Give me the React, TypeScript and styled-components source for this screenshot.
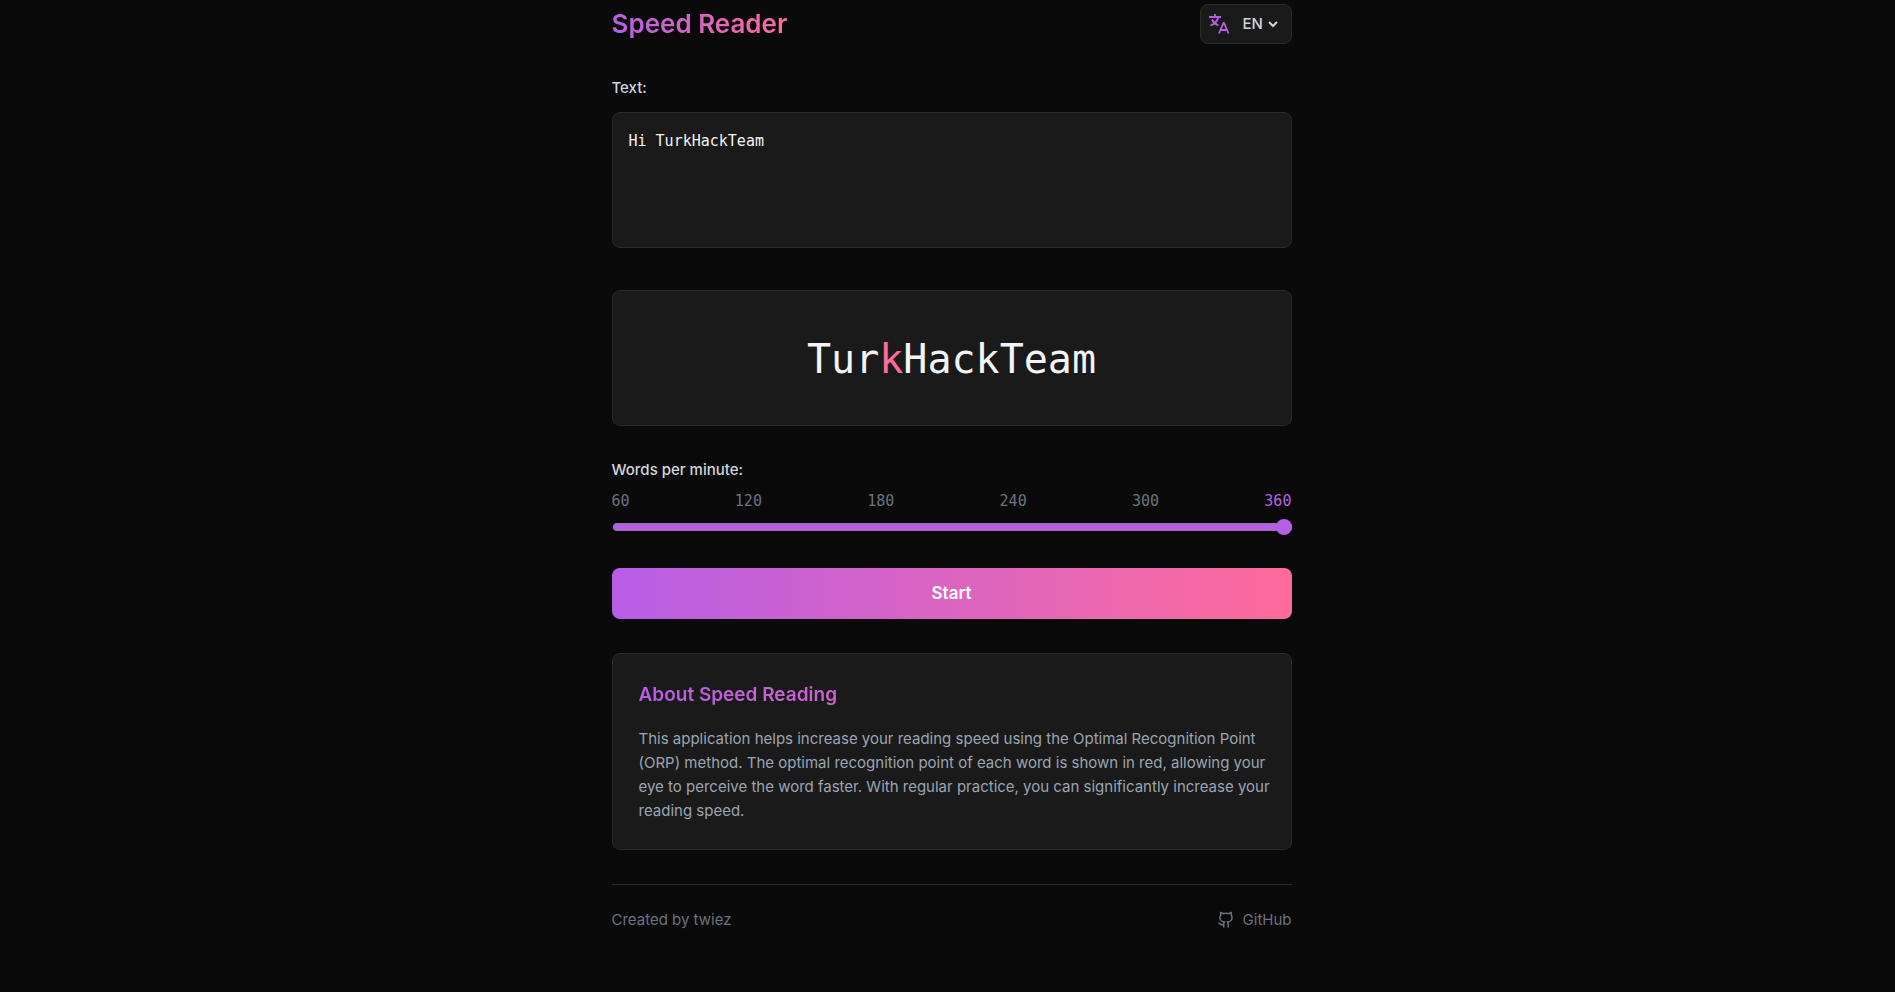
import React, { useState } from "react";
import styled, { createGlobalStyle } from "styled-components";

const sans = `Inter, "Noto Sans", sans-serif`;
const mono = `"DejaVu Sans Mono", "Liberation Mono", monospace`;
const accent = "linear-gradient(90deg, #b75ee6 0%, #ff6b9b 100%)";

const GlobalStyle = createGlobalStyle`
  *, *::before, *::after { box-sizing: border-box; }
  body {
    margin: 0;
    background: #0a0a0a;
    color: #d1d5db;
    font-family: ${sans};
    font-size: 15px;
    line-height: 24px;
  }
`;

const Page = styled.div`
  display: flex;
  justify-content: center;
  padding: 4px 0 48px 8px;
`;

const Container = styled.main`
  width: 100%;
  max-width: 680px;
  display: flex;
  flex-direction: column;
`;

const Header = styled.header`
  display: flex;
  align-items: center;
  justify-content: space-between;
  margin-bottom: 32px;
`;

const Title = styled.h1`
  margin: 0;
  font-size: 26px;
  line-height: 40px;
  font-weight: 600;
  background: ${accent};
  background-clip: text;
  color: transparent;
`;

const LanguagePicker = styled.label`
  display: flex;
  align-items: center;
  gap: 12px;
  height: 40px;
  padding: 0 12px 0 6px;
  background: #1a1a1a;
  border: 1px solid #2a2a2a;
  border-radius: 8px;
`;

const SelectWrap = styled.span`
  display: flex;
  align-items: center;
`;

const LanguageSelect = styled.select`
  appearance: none;
  border: 0;
  padding: 0;
  width: 24px;
  background: transparent;
  color: #d1d5db;
  font: 500 15px/24px ${sans};
`;

const Field = styled.section`
  display: flex;
  flex-direction: column;
`;

const Label = styled.label`
  font-weight: 500;
`;

const TextArea = styled.textarea`
  display: block;
  width: 100%;
  height: 136px;
  margin-top: 12px;
  padding: 16px;
  resize: none;
  background: #1a1a1a;
  border: 1px solid #2a2a2a;
  border-radius: 8px;
  color: #f3f4f6;
  font: 15px/24px ${mono};
`;

const Display = styled.div`
  display: flex;
  align-items: center;
  justify-content: center;
  height: 136px;
  margin: 42px 0 32px;
  padding-top: 2px;
  background: #1a1a1a;
  border: 1px solid #2a2a2a;
  border-radius: 8px;
  color: #f3f4f6;
  font: 40px/64px ${mono};
`;

const Pivot = styled.span`
  color: #ff6b9b;
`;

const Marks = styled.div`
  display: flex;
  justify-content: space-between;
  margin-top: 7px;
  font-family: ${mono};
`;

const Mark = styled.span<{ $active: boolean }>`
  color: ${(p) => (p.$active ? "#b75ee6" : "#6b7280")};
`;

const Slider = styled.input`
  appearance: none;
  height: 16px;
  margin: 6px 0 0 1px;
  background: transparent;

  &::-webkit-slider-runnable-track {
    height: 8px;
    border-radius: 4px;
    border: 1px solid #94759f;
    border-right: 0;
    background: #b75ee6;
  }
  &::-webkit-slider-thumb {
    appearance: none;
    width: 16px;
    height: 16px;
    margin-top: -5px;
    border-radius: 50%;
    background: #b75ee6;
  }
`;

const StartButton = styled.button`
  height: 51px;
  margin: 33px 0 34px;
  padding: 0 0 2px;
  border: 0;
  border-radius: 8px;
  background: ${accent};
  color: #fff;
  font: 600 17px/24px ${sans};
`;

const About = styled.section`
  padding: 26px 18px 26px 26px;
  background: #1a1a1a;
  border: 1px solid #2a2a2a;
  border-radius: 8px;
`;

const AboutTitle = styled.h2`
  margin: 0 0 17px;
  font-size: 19px;
  line-height: 30px;
  font-weight: 600;
  background: ${accent};
  background-clip: text;
  color: transparent;
`;

const AboutText = styled.p`
  margin: 0;
  color: #9aa5b3;
`;

const Footer = styled.footer`
  display: flex;
  align-items: center;
  justify-content: space-between;
  margin-top: 34px;
  padding-top: 23px;
  border-top: 1px solid #2a2a2a;
  color: #6b7280;
`;

const FooterLink = styled.a`
  display: flex;
  align-items: center;
  gap: 8px;
  color: inherit;
  text-decoration: none;
`;

function TranslateIcon() {
  return (
    <svg width="24" height="24" viewBox="0 0 24 24" fill="none" stroke="#b75ee6" strokeWidth="1.800" aria-hidden="true">
      <path d="M2 5h12M8 2v3M11.500 5c-1 4-4 7-8 8.500M5 7.500c1.500 3 4 5 6.500 6M12 21.500l4.500-10.500h.5l4.500 10.500M13.500 18h6.500" />
    </svg>
  );
}

function ChevronIcon() {
  return (
    <svg width="12" height="12" viewBox="0 0 12 12" fill="none" stroke="#d1d5db" strokeWidth="2" aria-hidden="true">
      <path d="M2 4l4 4 4-4" />
    </svg>
  );
}

function GitHubIcon() {
  return (
    <svg width="18" height="18" viewBox="0 0 24 24" fill="none" stroke="currentColor" strokeWidth="2" aria-hidden="true">
      <path d="M15 22v-4a4.800 4.800 0 0 0-1-3.500c3 0 6-2 6-5.500.080-1.250-.270-2.480-1-3.500.280-1.150.280-2.350 0-3.500 0 0-1 0-3 1.500-2.640-.5-5.360-.5-8 0C6 2 5 2 5 2c-.3 1.150-.3 2.350 0 3.500A5.400 5.400 0 0 0 4 9c0 3.500 3 5.500 6 5.500-.390.490-.680 1.050-.850 1.650-.170.600-.220 1.230-.150 1.850v4M9 18c-4.510 2-5-2-7-2" />
    </svg>
  );
}

const speeds = [60, 120, 180, 240, 300, 360];

export default function App() {
  const [text, setText] = useState("Hi TurkHackTeam");
  const [speed, setSpeed] = useState(360);

  return (
    <>
      <GlobalStyle />
      <Page>
        <Container>
          <Header>
            <Title>Speed Reader</Title>
            <LanguagePicker>
              <TranslateIcon />
              <SelectWrap>
                <LanguageSelect aria-label="Language" defaultValue="EN">
                  <option>EN</option>
                  <option>TR</option>
                </LanguageSelect>
                <ChevronIcon />
              </SelectWrap>
            </LanguagePicker>
          </Header>
          <Field>
            <Label htmlFor="text">Text:</Label>
            <TextArea id="text" spellCheck={false} value={text} onChange={(e) => setText(e.target.value)} />
          </Field>
          <Display>
            <span>Tur<Pivot>k</Pivot>HackTeam</span>
          </Display>
          <Field>
            <Label htmlFor="speed">Words per minute:</Label>
            <Marks>
              {speeds.map((s) => (
                <Mark key={s} $active={s === speed}>{s}</Mark>
              ))}
            </Marks>
            <Slider id="speed" type="range" min={60} max={360} step={60} value={speed} onChange={(e) => setSpeed(Number(e.target.value))} />
          </Field>
          <StartButton type="button">Start</StartButton>
          <About>
            <AboutTitle>About Speed Reading</AboutTitle>
            <AboutText>
              This application helps increase your reading speed using the Optimal Recognition Point (ORP) method. The
              optimal recognition point of each word is shown in red, allowing your eye to perceive the word faster. With
              regular practice, you can significantly increase your reading speed.
            </AboutText>
          </About>
          <Footer>
            <span>Created by twiez</span>
            <FooterLink href="#github">
              <GitHubIcon />
              GitHub
            </FooterLink>
          </Footer>
        </Container>
      </Page>
    </>
  );
}
